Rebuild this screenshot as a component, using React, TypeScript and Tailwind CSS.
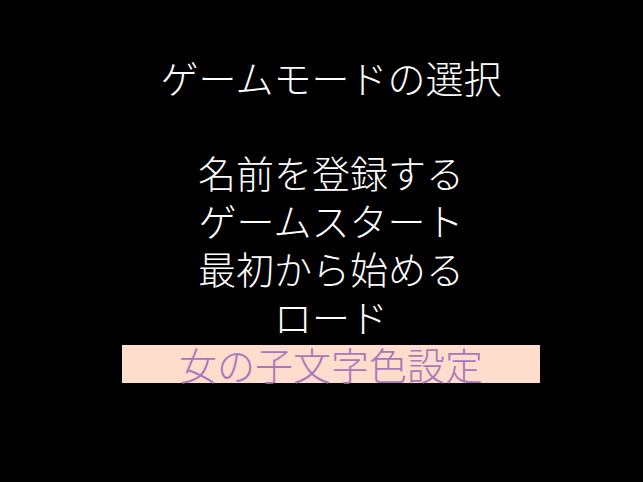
import React from 'react';

const items = ['名前を登録する', 'ゲームスタート', '最初から始める', 'ロード', '女の子文字色設定'];

export default function App() {
  const selected = 4;

  return (
    <div
      className="h-[482px] w-full bg-black pl-[19px] pt-[58px] overflow-hidden"
      style={{ fontFamily: '"Noto Sans CJK JP", "Noto Sans", sans-serif' }}
    >
      <div className="mx-auto w-[418px] flex flex-col items-center">
        <h1 className="h-[38px] leading-[38px] text-[38px] font-light text-white whitespace-nowrap">
          ゲームモードの選択
        </h1>
        <ul className="mt-[57px] w-full flex flex-col gap-[10px]">
          {items.map((label, i) => (
            <li
              key={label}
              className={
                i === selected
                  ? 'h-[38px] leading-[38px] text-[38px] font-light text-center whitespace-nowrap bg-[#ffddcc] text-[#aa77bb]'
                  : 'h-[38px] leading-[38px] text-[38px] font-light text-center whitespace-nowrap text-white'
              }
            >
              {label}
            </li>
          ))}
        </ul>
      </div>
    </div>
  );
}
